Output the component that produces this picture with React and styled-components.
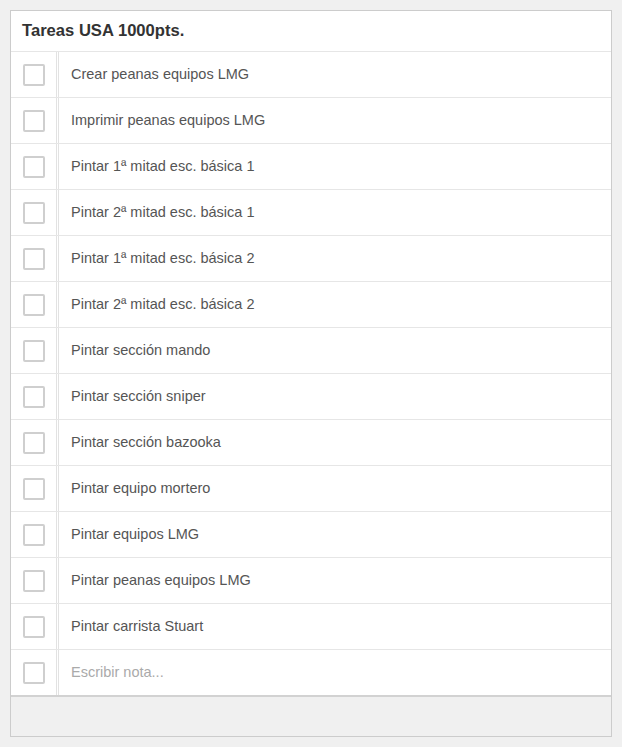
import React from 'react';
import styled, { createGlobalStyle } from 'styled-components';

const TASKS = [
  'Crear peanas equipos LMG',
  'Imprimir peanas equipos LMG',
  'Pintar 1ª mitad esc. básica 1',
  'Pintar 2ª mitad esc. básica 1',
  'Pintar 1ª mitad esc. básica 2',
  'Pintar 2ª mitad esc. básica 2',
  'Pintar sección mando',
  'Pintar sección sniper',
  'Pintar sección bazooka',
  'Pintar equipo mortero',
  'Pintar equipos LMG',
  'Pintar peanas equipos LMG',
  'Pintar carrista Stuart',
];

const GlobalStyle = createGlobalStyle`
  body {
    margin: 0;
    background: #f0f0f0;
    font-family: "Liberation Sans", Arial, sans-serif;
  }
`;

function App() {
  return (
    <Page>
      <GlobalStyle />
      <Card>
        <Header>Tareas USA 1000pts.</Header>
        {TASKS.map((task, idx) => (
          <Row key={idx}>
            <CheckCell>
              <Box />
            </CheckCell>
            <Label>{task}</Label>
          </Row>
        ))}
        <Row last>
          <CheckCell>
            <Box />
          </CheckCell>
          <Label placeholder>Escribir nota...</Label>
        </Row>
        <Footer />
      </Card>
    </Page>
  );
}

const Page = styled.div`
  padding: 10px;
`;

const Card = styled.div`
  border: 1px solid #cccccc;
  background: #fff;
`;

const Header = styled.div`
  height: 40px;
  display: flex;
  align-items: center;
  padding-left: 11px;
  font-size: 16.6px;
  font-weight: 700;
  color: #333;
  border-bottom: 1px solid #e6e6e6;
`;

const Row = styled.div`
  display: flex;
  height: 45px;
  border-bottom: ${p => (p.last ? '2px solid #d2d2d2' : '1px solid #e6e6e6')};
`;

const CheckCell = styled.div`
  flex: 0 0 48px;
  display: flex;
  align-items: center;
  padding-left: 12px;
  box-sizing: border-box;
  border-right: 3px double #e2e2e2;
`;

const Box = styled.div`
  width: 22px;
  height: 22px;
  box-sizing: border-box;
  border: 2px solid #cfcfcf;
  border-radius: 2px;
`;

const Label = styled.div`
  display: flex;
  align-items: center;
  padding-left: 12px;
  padding-bottom: 1px;
  font-size: 14.5px;
  color: ${p => (p.placeholder ? '#aaaaaa' : '#555555')};
`;

const Footer = styled.div`
  height: 39px;
  background: #f0f0f0;
`;

export default App;
